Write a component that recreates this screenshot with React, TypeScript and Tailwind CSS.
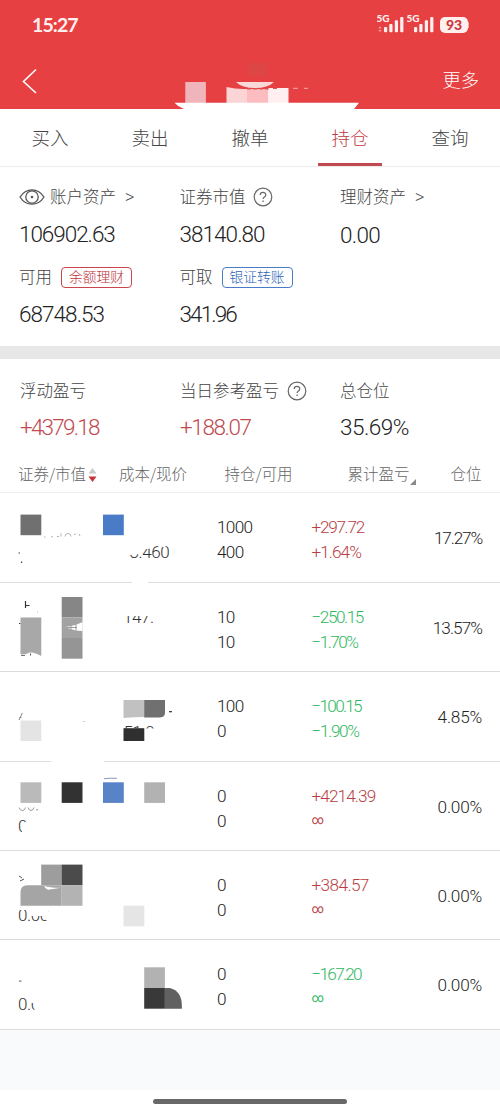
import type { ReactNode } from "react";

const numFont = "[font-family:Roboto,'Noto_Sans_CJK_SC',sans-serif]";

const tabs = ["买入", "卖出", "撤单", "持仓", "查询"];

function Help() {
  return (
    <svg width="20" height="20" viewBox="0 0 20 20" fill="none" stroke="#666" strokeWidth="1.2">
      <circle cx="10" cy="10" r="8.8" />
      <path d="M7.2 8.100c0-3.700 5.600-3.600 5.600-.1 0 2-2.700 2-2.700 4.100M10.100 13.600v1.300" />
    </svg>
  );
}

function Eye() {
  return (
    <svg width="26" height="18" viewBox="0 0 26 18" fill="none" stroke="#555" strokeWidth="1.3">
      <path d="M1 9C7-.6 19-.6 25 9 19 18.6 7 18.6 1 9z" />
      <circle cx="13" cy="9" r="6.2" />
      <circle cx="13" cy="9" r="1.3" fill="#555" stroke="none" />
    </svg>
  );
}

function Signal({ arrows }: { arrows?: boolean }) {
  return (
    <svg width="30" height="28" viewBox="0 -4 30 28" fill="#fff0ef">
      <text x="-0.500" y="7.200" fontSize="10" fontWeight="900" fontFamily="Lato, sans-serif" textLength="13" lengthAdjust="spacingAndGlyphs">
        5G
      </text>
      {arrows && <path d="M1.300 13.500l1.700-2.200 1.700 2.200zM1.300 14.900l1.700 2.200 1.700-2.200z" opacity=".55" />}
      <rect x="7" y="12" width="3.200" height="5.300" rx="1" />
      <rect x="12.300" y="9" width="3.200" height="8.300" rx="1" />
      <rect x="17.800" y="5.300" width="3.200" height="12" rx="1" />
      <rect x="23.200" y="2" width="3.200" height="15.300" rx="1" />
    </svg>
  );
}

function HeaderArt() {
  return (
    <svg width="190" height="54" viewBox="170 55 190 54" className="absolute bottom-0 left-[170px]">
      <rect x="248" y="63" width="19" height="13" fill="#dc4644" />
      <rect x="185.300" y="82" width="20.600" height="21" fill="#efb5ba" />
      <path d="M226.500 87q10 2.500 20.500 2v14h-20.500z" fill="#fbd4d6" />
      <rect x="247" y="89" width="21" height="14" fill="#fcbcc0" />
      <rect x="268" y="88" width="20.500" height="15" fill="#ffeff0" />
      <path d="M236 82h38q-6 6-19 6t-19-6z" fill="#fbd8d8" />
      <path d="M247 89h22M273 88.500h5" stroke="#d9565a" strokeWidth="1" strokeDasharray="4 2" />
      <path d="M293 88.300h5M304 88.300h4" stroke="#efa9a9" strokeWidth="1" />
      <path d="M174.500 102.800H359l-5 6.200H184q-6-2-9.500-6.200z" fill="#fff" />
    </svg>
  );
}

function Frag({ x, y, children }: { x: number; y: number; children: string }) {
  return (
    <text x={x} y={y} fontSize="17" fontWeight="300" fontFamily="Roboto, sans-serif" letterSpacing="-0.4" fill="#333">
      {children}
    </text>
  );
}

const art: ReactNode[] = [
  <>
    <rect x="20.500" y="21.600" width="20.800" height="20.600" fill="#707070" />
    <rect x="103" y="21.600" width="20.800" height="20.600" fill="#497bc7" />
    <path d="M44 44h1.500M51 43.800h2M57 43.500h2M61 40.500v3M65 43.500q0-3 3-3t3 3M74 41.500q1-1 2 0M79 41l1 2" stroke="#aaa" strokeWidth=".9" fill="none" />
    <Frag x={129.500} y={65}>3.460</Frag>
    <path d="M128 50h13v10.500q-7 2-13 1z" fill="#fff" />
    <path d="M140 50h12v5l-4 1h-8z" fill="#fff" />
    <path d="M161 50h5l-.5 4h-4z" fill="#fff" />
    <rect x="18.500" y="59.500" width="1.500" height="1" fill="#444" />
    <rect x="21" y="68.500" width="1.200" height="1.500" fill="#444" />
    <rect x="132" y="87" width="16" height="4" fill="#fff" />
  </>,
  <>
    <path d="M25.500 18v7M25.500 22.500h4" stroke="#333" strokeWidth="1.200" />
    <rect x="19" y="40" width="1.500" height="1" fill="#333" />
    <rect x="37" y="28.500" width="1" height="1" fill="#bbb" />
    <path d="M20.500 34.500h20.800v38.500q-5-3-9-3.500h-3l-3 1.500h-5.800z" fill="#a8a8a8" />
    <path d="M21 72.300h4M30.500 70.500v2" stroke="#555" strokeWidth="1" />
    <rect x="61.700" y="14" width="20.800" height="20.500" fill="#868686" />
    <rect x="61.700" y="34.500" width="20.800" height="20.500" fill="#a2a2a2" />
    <rect x="61.700" y="55" width="20.800" height="20.700" fill="#959595" />
    <path d="M65 44q10-1 17.500-5v9q-8 0-17.500-4z" fill="#fff" />
    <path d="M66 44.500h11M71 42.500v4M76 41v6" stroke="#999" strokeWidth="1" />
    <Frag x={123} y={39.800}>147.</Frag>
    <rect x="120" y="24" width="30" height="9" fill="#fff" />
  </>,
  <>
    <path d="M19 48l3.300-7M19.500 45.500h2" stroke="#888" strokeWidth="1" />
    <rect x="20.500" y="48.500" width="20.800" height="20.500" fill="#e4e4e4" />
    <rect x="83.500" y="49" width="1" height="1" fill="#999" />
    <path d="M123.500 28h20.800v17q-10 0-20.800 1z" fill="#c1c1c1" />
    <path d="M144.200 28h20.800v13q0 4-5 4.500h-15.800z" fill="#707070" />
    <rect x="169" y="39" width="3" height="1.300" fill="#444" />
    <Frag x={123.500} y={65.500}>51.0</Frag>
    <rect x="123" y="56.500" width="34" height="12" fill="#fff" />
    <rect x="123.500" y="56.200" width="20.800" height="12.800" fill="#2f2f2f" />
    <rect x="51" y="88" width="53" height="3.500" fill="#fff" />
  </>,
  <>
    <rect x="20.500" y="20.300" width="20.800" height="20.600" fill="#bababa" />
    <rect x="61.700" y="20.300" width="20.800" height="20.600" fill="#323232" />
    <rect x="103" y="20.300" width="20.800" height="20.600" fill="#5883c7" />
    <rect x="144.200" y="20.300" width="20.800" height="20.600" fill="#b2b2b2" />
    <path d="M104 16.800q6-1 13-.5" stroke="#8a9ab3" strokeWidth="1" fill="none" />
    <path d="M19 45.500q1 3 3.500 3t3-3M28 45.500q1 3 3 3t3-3M36 47.800h2" stroke="#999" strokeWidth="1" fill="none" />
    <Frag x={18} y={70}>0</Frag>
    <path d="M24.500 60h6v12h-8.500v-6h2.500z" fill="#fff" />
  </>,
  <>
    <path d="M19 25l3 2M20 30l4-2" stroke="#555" strokeWidth="1" />
    <rect x="41.200" y="13.600" width="20.600" height="20.600" fill="#9d9d9d" />
    <rect x="61.700" y="13.600" width="20.800" height="20.600" fill="#4b4b4b" />
    <path d="M27.500 34.200h34.200v20.600H20.500V41q0-6.800 7-6.800z" fill="#a5a5a5" />
    <rect x="61.700" y="34.200" width="20.800" height="20.600" fill="#b3b3b3" />
    <path d="M44 35q6 2 17 1.800l-13 2q-3-1-4-3.800z" fill="#fff" />
    <Frag x={18} y={70}>0.00</Frag>
    <path d="M17 55h31v4H17zM30 57h18v8H30zM44 61h7v9h-3.500l-3.500-3z" fill="#fff" />
    <rect x="123.500" y="54.700" width="20.800" height="20.600" fill="#e5e5e5" />
  </>,
  <>
    <rect x="19" y="40.500" width="2.500" height="1.200" fill="#777" />
    <Frag x={18} y={70}>0.0</Frag>
    <path d="M29 55h12v8H29zM34.500 60h7v12h-7z" fill="#fff" />
    <rect x="144.200" y="27.300" width="20.700" height="20.700" fill="#b2b2b2" />
    <rect x="144.200" y="48" width="20.700" height="20.700" fill="#393939" />
    <path d="M164.900 48h5q12 3 12 18v2.700h-17z" fill="#616161" />
  </>,
];

const rows = [
  { h: "h-[90px]", q: "1000", a: "400", p: "+297.72", r: "+1.64%", c: "17.27%", up: true, pt: "tracking-[-1.300px]", rt: "tracking-[-0.950px]", ct: "tracking-[-1.150px]" },
  { h: "h-[89px]", q: "10", a: "10", p: "−250.15", r: "−1.70%", c: "13.57%", up: false, pt: "tracking-[-1.450px]", rt: "tracking-[-1.550px]", ct: "tracking-[-0.950px]" },
  { h: "h-[90px]", q: "100", a: "0", p: "−100.15", r: "−1.90%", c: "4.85%", up: false, pt: "tracking-[-1.750px]", rt: "tracking-[-1.350px]", ct: "tracking-[-0.200px]" },
  { h: "h-[89px]", q: "0", a: "0", p: "+4214.39", r: "∞", c: "0.00%", up: true, pt: "tracking-[-0.900px]", rt: "", ct: "tracking-[-0.200px]" },
  { h: "h-[89px]", q: "0", a: "0", p: "+384.57", r: "∞", c: "0.00%", up: true, pt: "tracking-[-0.600px]", rt: "", ct: "tracking-[-0.200px]" },
  { h: "h-[90px]", q: "0", a: "0", p: "−167.20", r: "∞", c: "0.00%", up: false, pt: "tracking-[-1.750px]", rt: "", ct: "tracking-[-0.200px]" },
];

function Value({ children, tone = "text-[#222]", track }: { children: ReactNode; tone?: string; track: string }) {
  return <div className={`${numFont} ${tone} ${track} h-[30px] text-[22.500px] leading-[31px]`}>{children}</div>;
}

function Label({ children }: { children: ReactNode }) {
  return <div className="flex h-6 items-center text-[16.500px] leading-6 whitespace-nowrap text-[#444]">{children}</div>;
}

function Text({ children }: { children: ReactNode }) {
  return <span className="-mt-[2px]">{children}</span>;
}

function More() {
  return <span className="ml-[9px] [font-family:'Noto_Sans']">&gt;</span>;
}

export default function App() {
  return (
    <div className="flex h-[1111px] w-[500px] flex-col overflow-hidden bg-white font-light [font-family:'Noto_Sans_CJK_SC',sans-serif]">
      <header className="relative h-[109px] shrink-0 bg-[#e74042] text-white">
        <div className="flex h-[50px] items-center justify-between pr-[32px] pl-[32px]">
          <span className="[font-family:Lato,sans-serif] text-[19.500px] leading-none font-bold tracking-[-0.900px] text-[#fff0ef]">15:27</span>
          <div className="flex items-center">
            <Signal arrows />
            <Signal />
            <div className="ml-[3px] flex h-[16px] w-7 items-center justify-center rounded-[5px] bg-[#fff0ef] [font-family:Lato,sans-serif] text-[14px] leading-none font-black text-[#c9373b]">
              93
            </div>
            <div className="-mr-px h-1.5 w-px bg-[#f5a9a9]" />
          </div>
        </div>
        <div className="flex h-[59px] items-center justify-between pr-[21px] pl-[22px]">
          <svg width="16" height="26" viewBox="0 0 16 26" fill="none" stroke="#fff" strokeWidth="1.600" className="mt-0.5">
            <path d="M14 1.500L1.500 13.500 14 25" />
          </svg>
          <span className="text-[18.300px]">更多</span>
        </div>
        <HeaderArt />
      </header>

      <nav className="flex h-[58px] shrink-0 border-b border-[#ececec]">
        {tabs.map((t) => (
          <div
            key={t}
            className={`flex flex-1 flex-col items-center justify-between text-[18.500px] ${t === "持仓" ? "text-[#c03b42]" : "text-[#444]"}`}
          >
            <span className="pt-[13px] leading-[30px]">{t}</span>
            {t === "持仓" && <span className="h-[3px] w-16 bg-[#c04a52]" />}
          </div>
        ))}
      </nav>

      <section className="grid h-[179px] shrink-0 grid-cols-[160.500px_160.500px_1fr] grid-rows-[80px_80px] pt-[18px] pl-[19px]">
        <div>
          <Label>
            <Eye />
            <span className="-mt-[2px] ml-[5px]">账户资产</span>
            <More />
          </Label>
          <div className="pt-[10px]"><Value track="tracking-[-1.050px]">106902.63</Value></div>
        </div>
        <div>
          <Label>
            <span className="-mt-[2px] mr-[7px]">证券市值</span>
            <Help />
          </Label>
          <div className="pt-[10px]"><Value track="tracking-[-0.950px]">38140.80</Value></div>
        </div>
        <div>
          <Label>
            <Text>理财资产</Text>
            <More />
          </Label>
          <div className="pt-[11px]"><Value track="tracking-[-0.700px]">0.00</Value></div>
        </div>
        <div>
          <Label>
            <Text>可用</Text>
            <span className="ml-[9px] flex h-[21px] w-[71px] items-center justify-center rounded border-[1.500px] border-[#c8464c] text-[13.800px] text-[#c03038]">
              <Text>余额理财</Text>
            </span>
          </Label>
          <div className="pt-[10px]"><Value track="tracking-[-0.950px]">68748.53</Value></div>
        </div>
        <div>
          <Label>
            <Text>可取</Text>
            <span className="ml-[9px] flex h-[21px] w-[71px] items-center justify-center rounded border-[1.500px] border-[#4a7cc6] text-[13.800px] text-[#2d64b8]">
              <Text>银证转账</Text>
            </span>
          </Label>
          <div className="pt-[10px]"><Value track="tracking-[-1.900px]">341.96</Value></div>
        </div>
      </section>

      <div className="h-[13px] shrink-0 bg-[#e7e7e7]" />

      <section className="grid h-[100px] shrink-0 grid-cols-[160px_160px_1fr] pt-5 pl-5">
        <div>
          <Label><Text>浮动盈亏</Text></Label>
          <div className="pt-[9px]"><Value tone="text-[#c04a50]" track="tracking-[-1.800px]">+4379.18</Value></div>
        </div>
        <div>
          <Label>
            <span className="-mt-[2px] mr-[8px]">当日参考盈亏</span>
            <Help />
          </Label>
          <div className="pt-[9px]"><Value tone="text-[#c04a50]" track="tracking-[-1.400px]">+188.07</Value></div>
        </div>
        <div>
          <Label><Text>总仓位</Text></Label>
          <div className="pt-[9px]"><Value track="tracking-[-0.500px]">35.69%</Value></div>
        </div>
      </section>

      <div className="grid h-[34px] shrink-0 grid-cols-[101px_105.500px_123px_103px_1fr] border-b border-[#ededed] pl-[18px] text-[15.500px] leading-[28px] whitespace-nowrap text-[#666]">
        <span className="flex items-start">
          证券/市值
          <svg width="9" height="16" viewBox="0 0 9 16" className="mt-2 ml-0.5">
            <path d="M4.500 1L8.500 6.500h-8z" fill="#c5c9c7" />
            <path d="M4.500 15L8.500 9.500h-8z" fill="#c8343a" />
          </svg>
        </span>
        <span>成本/现价</span>
        <span>持仓/可用</span>
        <span className="flex items-start">
          累计盈亏
          <svg width="6" height="6" viewBox="0 0 6 6" className="mt-5"><path d="M6 0v6H0z" fill="#888" /></svg>
        </span>
        <span>仓位</span>
      </div>

      <main className="shrink-0">
        {rows.map((r, i) => (
          <div
            key={i}
            className={`${r.h} ${numFont} grid grid-cols-[217px_94.500px_1fr_90px] border-b border-[#dcdcdc] text-[17.200px] leading-[25px] text-[#222]`}
          >
            <svg width="200" height="88" viewBox="0 0 200 88" className="overflow-visible">{art[i]}</svg>
            <div className="pt-[22px] tracking-[-0.700px]">
              <div>{r.q}</div>
              <div className="-mt-[0.500px]">{r.a}</div>
            </div>
            <div className={`pt-[22px] ${r.up ? "text-[#b83d44]" : "text-[#2fb860]"}`}>
              <div className={r.pt}>{r.p}</div>
              {r.r === "∞" ? <div className="text-[12px] leading-[23px] font-normal">∞</div> : <div className={r.rt}>{r.r}</div>}
            </div>
            <div className={`pt-[33px] pr-[18px] text-right ${r.ct}`}>{r.c}</div>
          </div>
        ))}
      </main>

      <div className="h-[60px] shrink-0 bg-[#f8fafc]" />
      <footer className="flex flex-1 justify-center pt-[9px]">
        <div className="h-[5px] w-[194px] rounded-full bg-[#686868]" />
      </footer>
    </div>
  );
}
